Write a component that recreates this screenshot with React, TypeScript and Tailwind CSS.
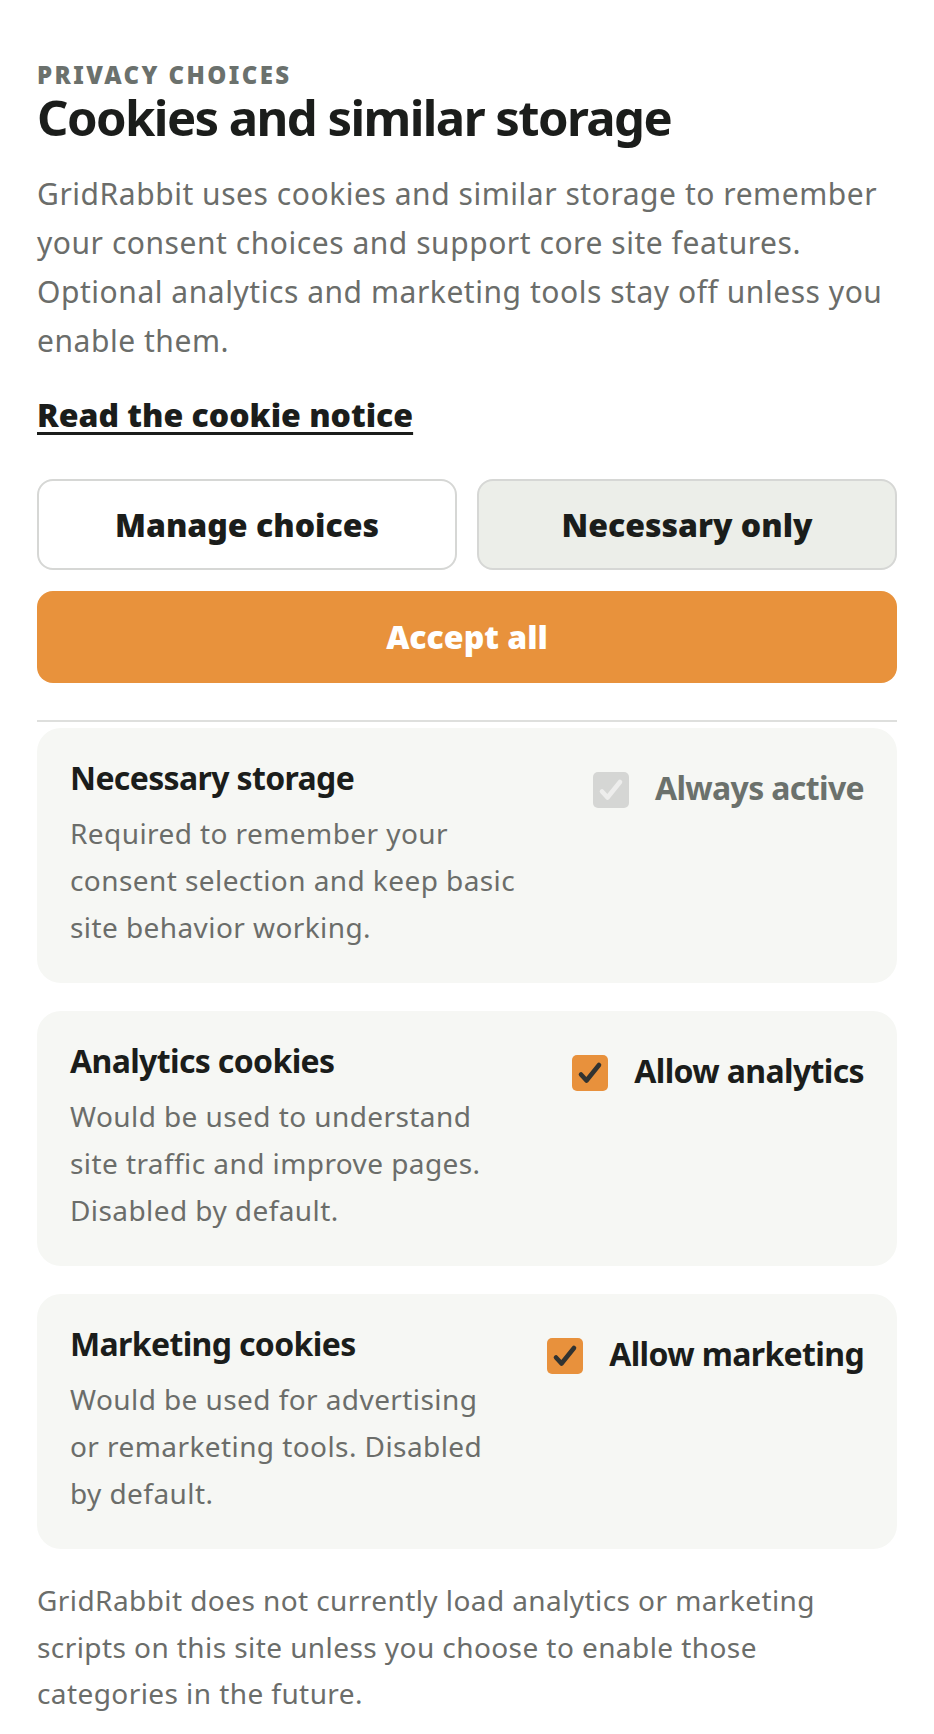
import React from "react"

type Category = {
  title: string
  text: string
  label: string
  locked?: boolean
}

const categories: Category[] = [
  {
    title: "Necessary storage",
    text: "Required to remember your consent selection and keep basic site behavior working.",
    label: "Always active",
    locked: true,
  },
  {
    title: "Analytics cookies",
    text: "Would be used to understand site traffic and improve pages. Disabled by default.",
    label: "Allow analytics",
  },
  {
    title: "Marketing cookies",
    text: "Would be used for advertising or remarketing tools. Disabled by default.",
    label: "Allow marketing",
  },
]

const CheckBox = ({ locked }: { locked?: boolean }) => (
  <span
    className={`mt-[5px] flex h-[36px] w-[36px] shrink-0 items-center justify-center rounded-[5px] ${
      locked ? "bg-[#d5d6d4]" : "bg-[#e8913c]"
    }`}
  >
    <svg viewBox="0 0 36 36" className="h-[36px] w-[36px]" fill="none">
      <path
        d="M9 19.5l5.5 6L27 10"
        stroke={locked ? "#ededec" : "#313331"}
        strokeWidth="4.6"
        strokeLinecap="round"
        strokeLinejoin="round"
      />
    </svg>
  </span>
)

const CategoryCard = ({ item }: { item: Category }) => (
  <div className="flex justify-between gap-[50px] rounded-[24px] bg-[#f6f7f4] pb-[32px] pl-[33px] pr-[33px] pt-[30px]">
    <div className="flex-1">
      <h3 className="text-[32px] font-bold leading-[40px] tracking-[-0.02em] text-[#1b1d1b]">
        {item.title}
      </h3>
      <p className="mt-[12px] text-[28px] leading-[47px] tracking-[0.015em] text-[#6b6d6a]">
        {item.text}
      </p>
    </div>
    <label className="mt-[9px] flex shrink-0 items-center gap-[26px] self-start">
      <CheckBox locked={item.locked} />
      <span
        className={`text-[32px] font-bold leading-[40px] tracking-[-0.02em] ${
          item.locked ? "text-[#6b716c]" : "text-[#1b1d1b]"
        }`}
      >
        {item.label}
      </span>
    </label>
  </div>
)

export default function App() {
  return (
    <div
      className="min-h-screen bg-white px-[37px] pb-[30px] pt-[63px]"
      style={{ fontFamily: "'Noto Sans', 'Open Sans', sans-serif" }}
    >
      {/* Header */}
      <p className="text-[24px] font-black uppercase leading-[24px] tracking-[0.1em] text-[#6b716d]">
        Privacy choices
      </p>
      <h1 className="mt-[2px] text-[49px] font-bold leading-[56px] tracking-[-0.032em] text-[#1b1d1b]">
        Cookies and similar storage
      </h1>
      <p className="mt-[24px] text-[30px] leading-[49px] tracking-[0.018em] text-[#6b6d6a]">
        GridRabbit uses cookies and similar storage to remember your consent choices and support
        core site features. Optional analytics and marketing tools stay off unless you enable them.
      </p>

      <a
        href="#"
        className="mt-[30px] inline-block text-[32px] font-black leading-[40px] text-[#1b1d1b] underline decoration-[3px] underline-offset-[5px]"
      >
        Read the cookie notice
      </a>

      {/* Actions */}
      <div className="mt-[44px] grid grid-cols-2 gap-[20px]">
        <button className="h-[91px] rounded-[16px] border-2 border-[#d6d7d5] bg-white text-[32px] font-black text-[#1b1d1b]">
          Manage choices
        </button>
        <button className="h-[91px] rounded-[16px] border-2 border-[#d6d7d5] bg-[#eceee9] text-[32px] font-black text-[#1b1d1b]">
          Necessary only
        </button>
      </div>
      <button className="mt-[21px] h-[92px] w-full rounded-[16px] bg-[#e8923c] text-[32px] font-black text-white">
        Accept all
      </button>

      <hr className="mt-[37px] border-t-2 border-[#dedfdd]" />

      {/* Categories */}
      <div className="mt-[6px] flex flex-col gap-[28px]">
        {categories.map((item) => (
          <CategoryCard key={item.title} item={item} />
        ))}
      </div>

      <p className="mt-[28px] text-[28px] leading-[46.5px] tracking-[0.015em] text-[#6b6d6a]">
        GridRabbit does not currently load analytics or marketing scripts on this site unless you
        choose to enable those categories in the future.
      </p>
    </div>
  )
}
